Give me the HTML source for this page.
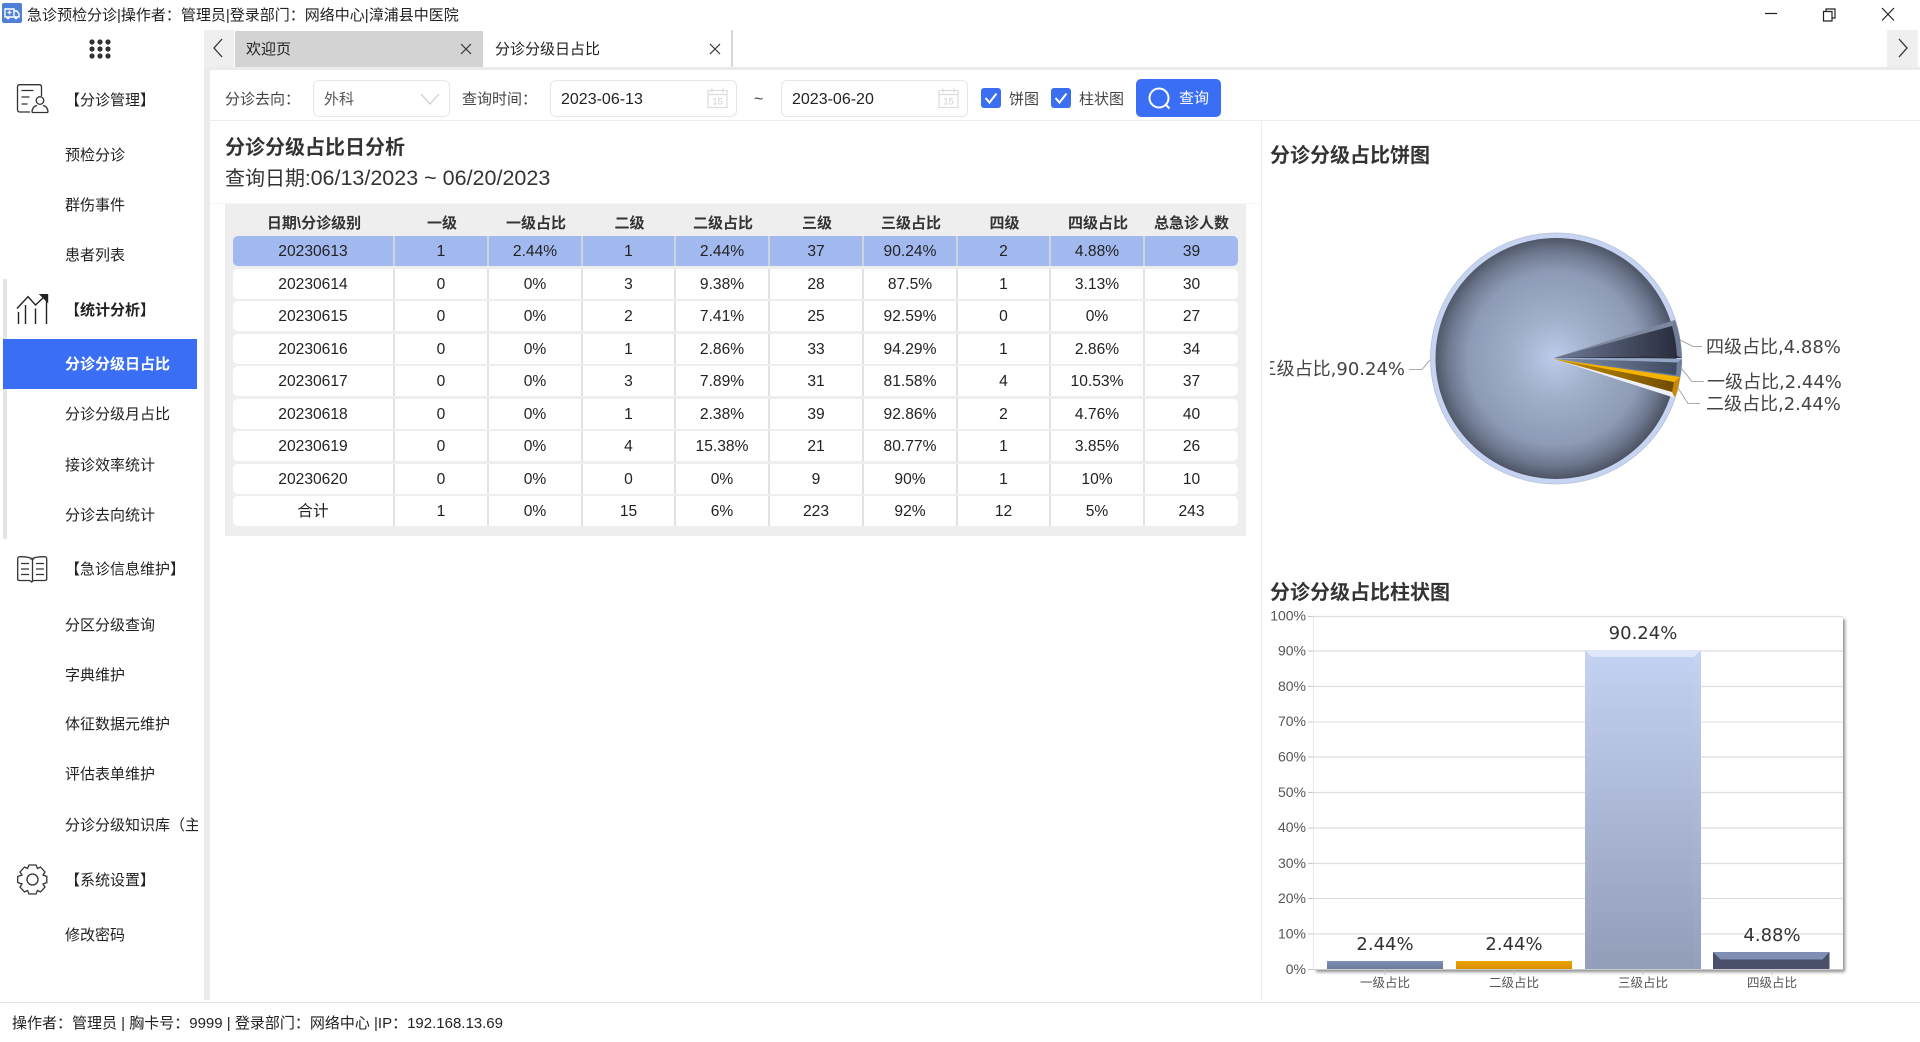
<!DOCTYPE html>
<html lang="zh"><head><meta charset="utf-8"><title>急诊预检分诊</title>
<style>
*{box-sizing:border-box}
html,body{margin:0;padding:0;width:1920px;height:1042px;overflow:hidden;background:#fff}
body{position:relative;font-family:"Liberation Sans","Noto Sans CJK SC",sans-serif;font-size:15px;color:#222}
.a{position:absolute;white-space:nowrap}
.t{position:absolute;white-space:nowrap;line-height:20px;height:20px;margin-top:1px}
.m{left:65px}
.g{left:65px}
.row{position:absolute;left:233px;width:1005px;height:30px;background:#fff;border-radius:5px;display:flex;font-size:15.6px;color:#222}
.row span{display:block;height:30px;line-height:32px;text-align:center;border-right:2px solid #e2e2e2;width:94px;flex:none}
.row span:first-child{width:162px}
.row span:nth-child(4),.row span:nth-child(8){width:93px}
.row span:last-child{border-right:0;width:93px}
.row.sel{background:#a2b9ef}
.row.sel span{border-right-color:#cdd3df}
.hd{position:absolute;left:233px;width:1005px;top:214px;height:20px;display:flex;font-weight:700;font-size:15px;color:#333}
.hd span{display:block;line-height:20px;text-align:center;width:94px;flex:none}
.hd span:first-child{width:162px}
.hd span:nth-child(4),.hd span:nth-child(8){width:93px}
.hd span:last-child{width:93px}
.inp{position:absolute;top:80px;height:37px;background:#fff;border:1px solid #e6e6e6;border-radius:6px}
svg{position:absolute;overflow:visible}
</style></head><body>

<!-- title bar -->
<svg style="left:2px;top:3px" width="20" height="20" viewBox="0 0 20 20"><rect width="20" height="20" rx="2" fill="#4f80d8"/><path d="M3 6h9v8H3zM12 8h3l2 3v3h-5z" fill="none" stroke="#fff" stroke-width="1.4"/><path d="M7.5 7.5v4M5.5 9.5h4" stroke="#fff" stroke-width="1.3"/><circle cx="6" cy="15" r="1.4" fill="#fff"/><circle cx="14" cy="15" r="1.4" fill="#fff"/></svg>
<div class="t" style="left:27px;top:5px;color:#222">急诊预检分诊|操作者&#65306;管理员|登录部门&#65306;网络中心|漳浦县中医院</div>
<svg style="left:0;top:0" width="1920" height="30"><path d="M1765 13.5h12" stroke="#222" stroke-width="1.2"/><path d="M1823.5 11.5h8.5v9.5h-8.5zM1826 11.5v-2.5h9v9h-3" fill="none" stroke="#222" stroke-width="1.2"/><path d="M1882 8l12 12.5M1894 8l-12 12.5" stroke="#222" stroke-width="1.2"/></svg>

<!-- sidebar -->
<svg style="left:89px;top:39px" width="22" height="20"><g fill="#333"><circle cx="3" cy="3" r="2.6"/><circle cx="11" cy="3" r="2.6"/><circle cx="19" cy="3" r="2.6"/><circle cx="3" cy="10" r="2.6"/><circle cx="11" cy="10" r="2.6"/><circle cx="19" cy="10" r="2.6"/><circle cx="3" cy="17" r="2.6"/><circle cx="11" cy="17" r="2.6"/><circle cx="19" cy="17" r="2.6"/></g></svg>
<svg style="left:17px;top:84px" width="31" height="30" viewBox="0 0 31 30" fill="none" stroke="#333" stroke-width="1.3"><path d="M13 28H3q-2.500 0-2.500-2.500V3Q.5 .7 3 .7h19q2.500 0 2.500 2.300V12"/><path d="M4.500 6.500h12M4.500 13h8M4.500 20h6"/><circle cx="23" cy="16.500" r="3.800"/><path d="M15 28.500q0-6 5-7M31 28.500q0-6-5-7M15 28.500h16"/></svg>
<div class="t g" style="top:90px">【分诊管理】</div>
<div class="t m" style="top:145px">预检分诊</div>
<div class="t m" style="top:195px">群伤事件</div>
<div class="t m" style="top:245px">患者列表</div>

<div class="a" style="left:3px;top:279px;width:4px;height:260px;background:#e4e4e4"></div>
<svg style="left:17px;top:294px" width="31" height="31" viewBox="0 0 31 31" fill="none" stroke="#222" stroke-width="1.4"><path d="M0 14.500L11 2.700l7.500 8.300L28 2"/><path d="M23.500 .7h7v7z" fill="#222"/><path d="M1.500 18v12M8.500 11v19M18.500 14.500v15.500M29.500 3v27"/></svg>
<div class="t g" style="top:300px;font-weight:700">【统计分析】</div>
<div class="a" style="left:3px;top:339px;width:194px;height:50px;background:#3a6ff5"></div>
<div class="t m" style="top:354px;color:#fff;font-weight:700">分诊分级日占比</div>
<div class="t m" style="top:404px">分诊分级月占比</div>
<div class="t m" style="top:455px">接诊效率统计</div>
<div class="t m" style="top:505px">分诊去向统计</div>

<svg style="left:17px;top:556px" width="31" height="27" viewBox="0 0 31 27" fill="none" stroke="#333" stroke-width="1.3"><path d="M15.500 3Q12 .7 3 .7 .7 .7 .7 3v20q0 1.500 2 1.500h9q2 0 3 1.500 1-1.500 3-1.500h10q2 0 2-1.500V3q0-2.300-2.300-2.300-9.500 0-12.700 2.300zM15.500 3v22"/><path d="M4 7.500h8M4 13h8M4 18.500h8M19 7.500h8M19 13h8M19 18.500h8"/></svg>
<div class="t g" style="top:559px">【急诊信息维护】</div>
<div class="t m" style="top:615px">分区分级查询</div>
<div class="t m" style="top:665px">字典维护</div>
<div class="t m" style="top:714px">体征数据元维护</div>
<div class="t m" style="top:764px">评估表单维护</div>
<div class="t m" style="top:815px;width:133px;overflow:hidden">分诊分级知识库&#65288;主</div>

<svg style="left:17px;top:864px" width="31" height="31" viewBox="0 0 31 31" fill="none" stroke="#333" stroke-width="1.3"><path d="M12 1h7l1.500 3.500 3-1.500 4.500 5-2 3 3.800 1.500v6l-3.800 1.500 2 3-4.500 5-3-1.500L19 30h-7l-1.500-3.500-3 1.500L3 23l2-3-4.300-1.500v-6L5 11 3 8l4.500-5 3 1.500z"/><circle cx="15.500" cy="15.500" r="5.500"/></svg>
<div class="t g" style="top:870px">【系统设置】</div>
<div class="t m" style="top:925px">修改密码</div>

<div class="a" style="left:204px;top:30px;width:6px;height:970px;background:#ebebeb"></div>

<!-- tabs -->
<div class="a" style="left:204px;top:30px;width:30px;height:37px;background:#efefef"></div>
<svg style="left:211px;top:38px" width="20" height="20" fill="none" stroke="#333" stroke-width="1.3"><path d="M11 1L3 10l8 9"/></svg>
<div class="a" style="left:235px;top:31px;width:248px;height:36px;background:#d3d3d3"></div>
<div class="t" style="left:246px;top:39px">欢迎页</div>
<svg style="left:460px;top:43px" width="12" height="12" stroke="#333" stroke-width="1.2"><path d="M1 1l10 10M11 1L1 11"/></svg>
<div class="t" style="left:495px;top:39px">分诊分级日占比</div>
<svg style="left:709px;top:43px" width="12" height="12" stroke="#333" stroke-width="1.2"><path d="M1 1l10 10M11 1L1 11"/></svg>
<div class="a" style="left:731px;top:30px;width:2px;height:37px;background:#d8d8d8"></div>
<div class="a" style="left:1887px;top:30px;width:31px;height:37px;background:#efefef"></div>
<svg style="left:1895px;top:38px" width="20" height="20" fill="none" stroke="#333" stroke-width="1.3"><path d="M4 1l8 9-8 9"/></svg>
<div class="a" style="left:204px;top:67px;width:1716px;height:3px;background:#ebebeb"></div>

<!-- toolbar -->
<div class="t" style="left:225px;top:89px;color:#444">分诊去向&#65306;</div>
<div class="inp" style="left:313px;width:137px"></div>
<div class="t" style="left:324px;top:89px;color:#555">外科</div>
<svg style="left:420px;top:92px" width="20" height="14" fill="none" stroke="#d4d4d4" stroke-width="1.4"><path d="M1 2l9 10 9-10"/></svg>
<div class="t" style="left:462px;top:89px;color:#444">查询时间&#65306;</div>
<div class="inp" style="left:550px;width:187px"></div>
<div class="t" style="left:561px;top:89px;font-size:16px">2023-06-13</div>
<svg style="left:707px;top:88px" width="21" height="20" fill="none" stroke="#dcdcdc" stroke-width="1.2"><rect x="1" y="2.500" width="19" height="17"/><path d="M1 6.500h19M5 .5v4M16 .5v4"/><text x="10.500" y="16.500" font-size="9.500" fill="#d0d0d0" stroke="none" text-anchor="middle">15</text></svg>
<div class="t" style="left:754px;top:89px;color:#444;font-size:16px">~</div>
<div class="inp" style="left:781px;width:187px"></div>
<div class="t" style="left:792px;top:89px;font-size:16px">2023-06-20</div>
<svg style="left:938px;top:88px" width="21" height="20" fill="none" stroke="#dcdcdc" stroke-width="1.2"><rect x="1" y="2.500" width="19" height="17"/><path d="M1 6.500h19M5 .5v4M16 .5v4"/><text x="10.500" y="16.500" font-size="9.500" fill="#d0d0d0" stroke="none" text-anchor="middle">15</text></svg>
<svg style="left:981px;top:88px" width="20" height="20"><rect width="20" height="20" rx="3" fill="#3a6ff0"/><path d="M4.500 10l4 4.500 7-9" fill="none" stroke="#fff" stroke-width="2"/></svg>
<div class="t" style="left:1009px;top:89px;color:#444">饼图</div>
<svg style="left:1051px;top:88px" width="20" height="20"><rect width="20" height="20" rx="3" fill="#3a6ff0"/><path d="M4.500 10l4 4.500 7-9" fill="none" stroke="#fff" stroke-width="2"/></svg>
<div class="t" style="left:1079px;top:89px;color:#444">柱状图</div>
<div class="a" style="left:1136px;top:79px;width:85px;height:38px;background:#3a6ff5;border-radius:5px"></div>
<svg style="left:1148px;top:87px" width="24" height="24" fill="none" stroke="#fff" stroke-width="2"><circle cx="11" cy="11" r="9.500"/><path d="M18 18l3.500 3.500"/></svg>
<div class="t" style="left:1179px;top:88px;color:#fff">查询</div>
<div class="a" style="left:210px;top:120px;width:1710px;height:1px;background:#ececec"></div>

<!-- left content -->
<div class="a" style="left:210px;top:203px;width:1051px;height:1px;background:#f6f6f6"></div>
<div class="a" style="left:225px;top:134px;line-height:28px;font-size:20px;font-weight:700;color:#333">分诊分级占比日分析</div>
<div class="a" style="left:225px;top:164px;line-height:28px;font-size:20px;color:#333">查询日期:<span style="font-size:21.5px">06/13/2023 ~ 06/20/2023</span></div>

<div class="a" style="left:225px;top:204px;width:1021px;height:332px;background:#eee"></div>
<div class="hd"><span>日期\分诊级别</span><span>一级</span><span>一级占比</span><span>二级</span><span>二级占比</span><span>三级</span><span>三级占比</span><span>四级</span><span>四级占比</span><span>总急诊人数</span></div>
<div class="row sel" style="top:236px"><span>20230613</span><span>1</span><span>2.44%</span><span>1</span><span>2.44%</span><span>37</span><span>90.24%</span><span>2</span><span>4.88%</span><span>39</span></div>
<div class="row" style="top:269px"><span>20230614</span><span>0</span><span>0%</span><span>3</span><span>9.38%</span><span>28</span><span>87.5%</span><span>1</span><span>3.13%</span><span>30</span></div>
<div class="row" style="top:301px"><span>20230615</span><span>0</span><span>0%</span><span>2</span><span>7.41%</span><span>25</span><span>92.59%</span><span>0</span><span>0%</span><span>27</span></div>
<div class="row" style="top:334px"><span>20230616</span><span>0</span><span>0%</span><span>1</span><span>2.86%</span><span>33</span><span>94.29%</span><span>1</span><span>2.86%</span><span>34</span></div>
<div class="row" style="top:366px"><span>20230617</span><span>0</span><span>0%</span><span>3</span><span>7.89%</span><span>31</span><span>81.58%</span><span>4</span><span>10.53%</span><span>37</span></div>
<div class="row" style="top:399px"><span>20230618</span><span>0</span><span>0%</span><span>1</span><span>2.38%</span><span>39</span><span>92.86%</span><span>2</span><span>4.76%</span><span>40</span></div>
<div class="row" style="top:431px"><span>20230619</span><span>0</span><span>0%</span><span>4</span><span>15.38%</span><span>21</span><span>80.77%</span><span>1</span><span>3.85%</span><span>26</span></div>
<div class="row" style="top:464px"><span>20230620</span><span>0</span><span>0%</span><span>0</span><span>0%</span><span>9</span><span>90%</span><span>1</span><span>10%</span><span>10</span></div>
<div class="row" style="top:496px"><span>合计</span><span>1</span><span>0%</span><span>15</span><span>6%</span><span>223</span><span>92%</span><span>12</span><span>5%</span><span>243</span></div>

<div class="a" style="left:1261px;top:121px;width:1px;height:879px;background:#ececec"></div>

<!-- right content -->
<div class="a" style="left:1270px;top:142px;line-height:28px;font-size:20px;font-weight:700;color:#333">分诊分级占比饼图</div>
<div class="a" style="left:1270px;top:579px;line-height:28px;font-size:20px;font-weight:700;color:#333">分诊分级占比柱状图</div>

<svg style="left:0;top:0" width="1920" height="1042" viewBox="0 0 1920 1042">
<defs>
<radialGradient id="pg" gradientUnits="userSpaceOnUse" cx="1555" cy="358" r="120.500"><stop offset="0" stop-color="#bccbea"/><stop offset=".35" stop-color="#a0aec8"/><stop offset=".72" stop-color="#8d9ab5"/><stop offset=".88" stop-color="#6f7a91"/><stop offset="1" stop-color="#4e5566"/></radialGradient>
<linearGradient id="s4" gradientUnits="userSpaceOnUse" x1="1554" y1="0" x2="1678" y2="0"><stop offset="0" stop-color="#6f7b98"/><stop offset="1" stop-color="#282c3c"/></linearGradient>
<linearGradient id="s1" gradientUnits="userSpaceOnUse" x1="1554" y1="0" x2="1678" y2="0"><stop offset="0" stop-color="#8492ae"/><stop offset="1" stop-color="#3e4a60"/></linearGradient>
<linearGradient id="s2" gradientUnits="userSpaceOnUse" x1="1554" y1="0" x2="1678" y2="0"><stop offset="0" stop-color="#c89000"/><stop offset="1" stop-color="#6e4a00"/></linearGradient>
<linearGradient id="b1" x1="0" y1="0" x2="0" y2="1"><stop offset="0" stop-color="#7f90b6"/><stop offset="1" stop-color="#6c7a98"/></linearGradient>
<linearGradient id="b2" x1="0" y1="0" x2="0" y2="1"><stop offset="0" stop-color="#eca400"/><stop offset="1" stop-color="#d98e00"/></linearGradient>
<linearGradient id="b3" x1="0" y1="0" x2="0" y2="1"><stop offset="0" stop-color="#c3d1f2"/><stop offset="1" stop-color="#929db8"/></linearGradient>
<linearGradient id="b3e" x1="0" y1="0" x2="0" y2="1"><stop offset="0" stop-color="#c6d3f3"/><stop offset="1" stop-color="#959fbb"/></linearGradient>
<filter id="bl" x="-5%" y="-5%" width="110%" height="110%"><feGaussianBlur stdDeviation="1.500"/></filter>
<clipPath id="cl3"><rect x="1270" y="350" width="200" height="40"/></clipPath>
</defs>

<!-- pie -->
<circle cx="1556" cy="358.500" r="125.500" fill="#c6d4f2" stroke="#b4c0da" stroke-width=".8"/>
<circle cx="1556" cy="358.500" r="120.500" fill="url(#pg)"/>
<path d="M1554 358L1675 320A126 126 0 0 1 1682 358Z" fill="#6f7a95"/>
<path d="M1554 358L1675 320L1672 326Z" fill="#7d889f"/>
<path d="M1554 358L1672 326Q1676 340 1677 356Z" fill="url(#s4)"/>
<path d="M1554 358L1682 358L1677 356Z" fill="#2a2d3c"/>
<path d="M1554 358.500L1682 359Q1682 370 1680 378Z" fill="#6f7f9f"/>
<path d="M1554 358.500L1682 359L1677 362.500Z" fill="#93a4c4"/>
<path d="M1554 358.500L1677 362.500L1676 375Z" fill="url(#s1)"/>
<path d="M1554 359L1680 377Q1679 388 1675 397Z" fill="#c88a00"/>
<path d="M1554 359L1680 377L1674 382Z" fill="#f5b400"/>
<path d="M1554 359L1674 382L1672 392Z" fill="url(#s2)"/>
<path d="M1554 359L1672 392L1675 398Z" fill="#edf1fa"/>
<g fill="none" stroke="#aaa" stroke-width="1"><path d="M1680 340L1693 346.500H1702"/><path d="M1681 368L1692 381.500H1704"/><path d="M1678 388L1688 403.500H1700"/><path d="M1430 360L1422 369.500H1409"/></g>
<g font-family="'DejaVu Sans','Noto Sans CJK SC',sans-serif" font-size="18" fill="#444">
<text x="1706" y="353">四级占比,4.88%</text>
<text x="1707" y="388">一级占比,2.44%</text>
<text x="1706" y="410">二级占比,2.44%</text>
<g clip-path="url(#cl3)"><text x="1405" y="375" text-anchor="end">三级占比,90.24%</text></g>
</g>

<!-- bar chart -->
<rect x="1316" y="619" width="529" height="353" fill="#666" filter="url(#bl)" opacity=".75"/>
<rect x="1313" y="616" width="530" height="353" fill="#fff"/>
<path d="M1313.500 616v353" stroke="#eaeaea"/>
<g stroke="#dedede" stroke-width="1.200"><path d="M1313 616.500h530M1313 651h530M1313 686.500h530M1313 757h530M1313 792.500h530M1313 828h530M1313 863.500h530M1313 898.500h530M1313 934h530"/></g>
<path d="M1313 722h530" stroke="#efefef" stroke-width="2"/>
<path d="M1313 969.500h530" stroke="#ccc"/>
<g stroke="#c4c4c4"><path d="M1308 616.500h5M1308 651h5M1308 686.500h5M1308 722h5M1308 757h5M1308 792.500h5M1308 828h5M1308 863.500h5M1308 898.500h5M1308 934h5M1308 969.500h5M1385 969v6M1514 969v6M1643 969v6M1772 969v6"/></g>
<rect x="1327" y="961" width="116" height="8" fill="url(#b1)"/>
<rect x="1456" y="961" width="116" height="8" fill="url(#b2)"/>
<rect x="1585" y="650" width="116" height="319" fill="url(#b3e)"/>
<rect x="1592" y="657" width="102" height="312" fill="url(#b3)"/>
<path d="M1585 650h116l-7 7h-102z" fill="#dfe8fb"/>
<rect x="1713" y="952" width="116.500" height="17" fill="#4a5069"/>
<path d="M1713 952h116.500l-7 7.500h-102z" fill="#7f8eb2"/>
<g font-family="'DejaVu Sans',sans-serif" font-size="18" fill="#333" text-anchor="middle">
<text x="1643" y="639">90.24%</text><text x="1385" y="950">2.44%</text><text x="1514" y="950">2.44%</text><text x="1772" y="941">4.88%</text>
</g>
<g font-family="'Liberation Sans',sans-serif" font-size="14" fill="#555" text-anchor="end">
<text x="1306" y="620.500">100%</text><text x="1306" y="655.500">90%</text><text x="1306" y="691">80%</text><text x="1306" y="726">70%</text><text x="1306" y="761.500">60%</text><text x="1306" y="797">50%</text><text x="1306" y="832">40%</text><text x="1306" y="868">30%</text><text x="1306" y="903">20%</text><text x="1306" y="938.500">10%</text><text x="1306" y="974">0%</text>
</g>
<g font-family="'Liberation Sans','Noto Sans CJK SC',sans-serif" font-size="12.500" fill="#555" text-anchor="middle">
<text x="1385" y="987">一级占比</text><text x="1514" y="987">二级占比</text><text x="1643" y="987">三级占比</text><text x="1772" y="987">四级占比</text>
</g>
</svg>

<!-- status -->
<div class="a" style="left:0;top:1002px;width:1920px;height:1px;background:#e2e2e2"></div>
<div class="t" style="left:12px;top:1013px">操作者&#65306;管理员 | 胸卡号&#65306;9999 | 登录部门&#65306;网络中心 |IP&#65306;192.168.13.69</div>
</body></html>
